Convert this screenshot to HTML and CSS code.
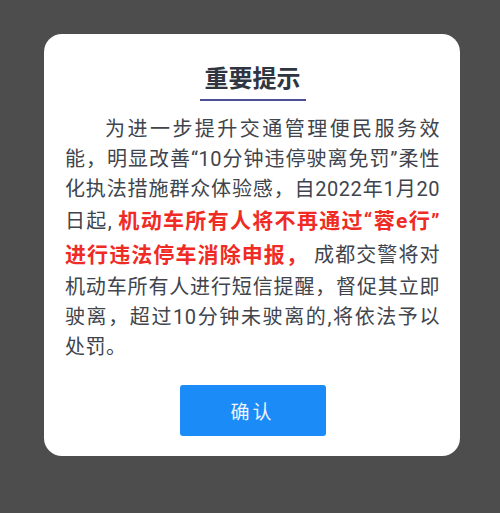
FILE: index.html
```html
<!DOCTYPE html>
<html lang="zh-CN">
<head>
  <meta charset="UTF-8" />
  <meta name="viewport" content="width=device-width, initial-scale=1.0"/>
  <title>重要提示</title>
  <link rel="stylesheet" href="styles.css">
</head>
<body>
  <div class="mask">
    <div class="dialog">
      <div class="dialog-head">
        <h2 class="dialog-title">重要提示</h2>
      </div>
      <p class="dialog-text">为进一步提升交通管理便民服务效能，明显改善“10分钟违停驶离免罚”柔性化执法措施群众体验感，自2022年1月20日起, <span class="warn">机动车所有人将不再通过“蓉e行”进行违法停车消除申报，</span> 成都交警将对机动车所有人进行短信提醒，督促其立即驶离，超过10分钟未驶离的,将依法予以处罚。</p>
      <div class="dialog-foot">
        <button class="btn-ok">确认</button>
      </div>
    </div>
  </div>
</body>
</html>
```

FILE: styles.css
```css
body {
  margin: 0;
  font-family: Roboto, "Noto Sans CJK SC", sans-serif;
  background: #4d4d4d;
}
.mask {
  height: 513px;
  padding: 34px 0 0 44px;
  box-sizing: border-box;
}
.dialog {
  width: 416px;
  height: 422px;
  box-sizing: border-box;
  background: #fff;
  border-radius: 18px;
  padding: 30px 20px 20px 21px;
}
.dialog-head {
  text-align: center;
}
.dialog-title {
  display: inline-block;
  margin: 0;
  padding: 0 5px 5px;
  font-size: 24px;
  line-height: 30px;
  font-weight: bold;
  color: #2f3541;
  border-bottom: 2px solid #4b4f96;
}
.dialog-text {
  margin: 13px 0 0;
  font-size: 20px;
  line-height: 30px;
  letter-spacing: 0.5px;
  text-indent: 2em;
  text-align: justify;
  color: #40444c;
}
.warn {
  color: #ef2b25;
  font-weight: bold;
  font-size: 21px;
  line-height: 34px;
}
.dialog-foot {
  display: flex;
  justify-content: center;
  margin-top: 23px;
}
.btn-ok {
  width: 146px;
  height: 51px;
  border: none;
  border-radius: 3px;
  background: #1b8bf8;
  color: #eef4ff;
  font-family: inherit;
  font-size: 19px;
  letter-spacing: 3px;
  cursor: pointer;
}
```
